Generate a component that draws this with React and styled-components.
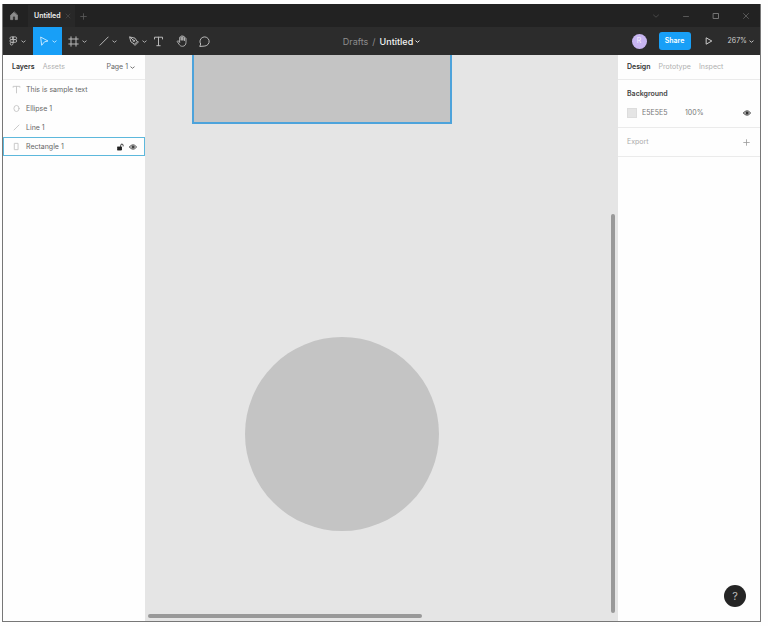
import React from 'react'
import styled, { createGlobalStyle } from 'styled-components'

const GlobalStyle = createGlobalStyle`
  * {
    box-sizing: border-box;
  }
  body {
    margin: 0;
    background: #fefefe;
    font-family: Inter, "Liberation Sans", sans-serif;
    font-size: 7px;
    line-height: 10px;
    color: #333;
  }
  button, input {
    font: inherit;
    color: inherit;
    margin: 0;
    padding: 0;
    border: 0;
    background: none;
  }
  svg {
    display: block;
    flex: none;
  }
`

const Page = styled.div`
  height: 100vh;
  padding: 4px 7px 4px 2px;
`

const Window = styled.div`
  height: 100%;
  display: flex;
  flex-direction: column;
  border: 1px solid #777;
  border-top: 0;
`

const TitleBar = styled.header`
  height: 23px;
  flex: none;
  display: flex;
  align-items: center;
  padding-top: 1px;
  background: #222;
  color: #777;
`

const HomeButton = styled.button`
  width: 25px;
  display: flex;
  padding-left: 6px;
  color: #8c8c8c;
`

const FileTab = styled.div`
  height: 100%;
  width: 47px;
  display: flex;
  align-items: center;
  justify-content: space-between;
  padding: 0 4px 0 6px;
  background: #282828;
  color: #f0f0f0;
  font-weight: 600;
`

const TabButton = styled.button`
  display: flex;
  color: #484848;
`

const NewTabButton = styled(TabButton)`
  margin-left: 5px;
  color: #5c5c5c;
`

const WindowButtons = styled.div`
  margin-left: auto;
  display: flex;
  padding-right: 10px;
  gap: 22px;
`

const Toolbar = styled.div`
  height: 28px;
  flex: none;
  display: grid;
  grid-template-columns: 1fr auto 1fr;
  background: #2c2c2c;
  color: #b8b8b8;
`

const Tools = styled.div`
  display: flex;
  gap: 1px;
`

const MenuTool = styled.button`
  width: 29px;
  display: flex;
  align-items: center;
  justify-content: center;
  gap: 3px;
  background: ${(p) => (p.$active ? '#189ff7' : 'none')};
  color: ${(p) => (p.$active ? '#c0e6ff' : '#b8b8b8')};
`

const PlainTools = styled.div`
  display: flex;
  gap: 12px;
`

const PlainTool = styled.button`
  width: 11px;
  display: flex;
  align-items: center;
  justify-content: center;
`

const FileTitle = styled.div`
  display: flex;
  align-items: center;
  gap: 4px;
  padding-top: 1px;
  font-size: 9px;
  color: #8c8c8c;
`

const FileName = styled.button`
  display: flex;
  align-items: center;
  gap: 2px;
  font-weight: 500;
  color: #f4f4f4;
`

const Actions = styled.div`
  display: flex;
  align-items: center;
  justify-content: flex-end;
  padding-right: 6px;
`

const Avatar = styled.span`
  width: 15px;
  height: 15px;
  border-radius: 50%;
  display: flex;
  align-items: center;
  justify-content: center;
  background: #c7b5f0;
  color: #f6f1ff;
`

const ShareButton = styled.button`
  width: 32px;
  height: 18px;
  margin: 0 14px 0 12px;
  border-radius: 3px;
  background: #189ff7;
  color: #fff;
  font-weight: 600;
`

const IconButton = styled.button`
  display: flex;
  color: ${(p) => p.$color || '#ccc'};
`

const ZoomButton = styled.button`
  display: flex;
  align-items: center;
  gap: 2px;
  margin-left: 15px;
  color: #ccc;
`

const Body = styled.div`
  flex: 1;
  min-height: 0;
  display: grid;
  grid-template-columns: 142px 1fr 142px;
`

const Panel = styled.aside`
  background: #fefefe;
  position: relative;
`

const Tabs = styled.div`
  height: 25px;
  display: flex;
  align-items: center;
  gap: 8px;
  padding: 0 10px 0 9px;
  border-bottom: 1px solid #ebebeb;
`

const Tab = styled.button`
  color: ${(p) => (p.$active ? '#333' : '#b0b0b0')};
  font-weight: ${(p) => (p.$active ? 600 : 400)};
`

const PageButton = styled.button`
  display: flex;
  align-items: center;
  gap: 2px;
  margin-left: auto;
  color: #666;
`

const Layers = styled.ul`
  list-style: none;
  margin: 0;
  padding: 0;
`

const Layer = styled.li`
  height: 19px;
  display: flex;
  align-items: center;
  gap: 5px;
  padding: 0 7px 0 8px;
  border: 1px solid ${(p) => (p.$selected ? '#5db8dc' : 'transparent')};
  color: #c4c4c4;
`

const LayerName = styled.button`
  flex: 1;
  text-align: left;
  color: #666;
`

const Canvas = styled.main`
  position: relative;
  overflow: hidden;
  background: #e5e5e5;
`

const RectangleShape = styled.div`
  position: absolute;
  left: 47px;
  top: -60px;
  width: 260px;
  height: 129px;
  background: #c4c4c4;
  border: 2px solid #4da3db;
`

const EllipseShape = styled.div`
  position: absolute;
  left: 100px;
  top: 282px;
  width: 194px;
  height: 194px;
  border-radius: 50%;
  background: #c4c4c4;
`

const ScrollThumb = styled.div`
  position: absolute;
  border-radius: 2px;
  background: #999;
`

const VerticalThumb = styled(ScrollThumb)`
  right: 3px;
  top: 159px;
  bottom: 8px;
  width: 4px;
`

const HorizontalThumb = styled(ScrollThumb)`
  left: 3px;
  bottom: 3px;
  width: 58%;
  height: 4px;
`

const Section = styled.section`
  padding: 9px;
  border-bottom: 1px solid #ebebeb;
`

const SectionTitle = styled.h2`
  margin: 0;
  font-size: 7px;
  font-weight: ${(p) => (p.$muted ? 400 : 600)};
  color: ${(p) => (p.$muted ? '#aaa' : '#444')};
`

const SectionHeader = styled.div`
  display: flex;
  align-items: center;
  justify-content: space-between;
  padding-right: 1px;
`

const FillRow = styled.div`
  display: flex;
  align-items: center;
  margin-top: 9px;
  color: #777;
`

const Swatch = styled.button`
  width: 10px;
  height: 10px;
  margin-right: 5px;
  background: #e5e5e5;
  border: 1px solid #ddd;
`

const Field = styled.input`
  width: ${(p) => (p.$wide ? '43px' : '24px')};
  height: 10px;
  outline: none;
`

const FillEye = styled(IconButton)`
  margin-left: auto;
`

const HelpButton = styled.button`
  position: absolute;
  right: 14px;
  bottom: 14px;
  width: 22px;
  height: 22px;
  border-radius: 50%;
  background: #252525;
  color: #bbb;
  font-size: 11px;
`

const Icon = ({ w = 10, h = w, sw = 1, box, children }) => (
  <svg width={w} height={h} viewBox={box || `0 0 ${w} ${h}`} fill="none" stroke="currentColor" strokeWidth={sw} strokeLinecap="round" strokeLinejoin="round" aria-hidden="true">
    {children}
  </svg>
)

const Chevron = () => (
  <Icon w={5} sw={0.9}><path d="M.8 1.9 2.5 3.3 4.2 1.9" /></Icon>
)

const Cross = () => (
  <Icon w={6} sw={0.8}><path d="M1 1l4 4M5 1 1 5" /></Icon>
)

const Plus = ({ size = 7 }) => (
  <Icon w={size} sw={0.8} box="0 0 7 7"><path d="M3.5.7v5.6M.7 3.5h5.6" /></Icon>
)

const Home = () => (
  <Icon w={10} sw={0.8}>
    <path d="M5 1.2 1.6 4.2v4.4h2.2V6.2a1.2 1.2 0 0 1 2.4 0v2.4h2.2V4.2z" fill="currentColor" />
  </Icon>
)

const FigmaMark = () => (
  <Icon w={9} h={10} sw={0.9}>
    <path d="M4 .9H2.3a1.3 1.3 0 0 0 0 2.7H4zM4 .9h2.3a1.3 1.3 0 0 1 0 2.7H4zM4 3.6H2.3a1.3 1.3 0 0 0 0 2.7H4zM4 6.3H2.3A1.4 1.4 0 1 0 4 7.8zM4 3.6h2.3a1.3 1.3 0 0 1 0 2.7H4" />
  </Icon>
)

const Pointer = () => (
  <Icon w={10}><path d="M2 1.2 9 5 5.5 5.8 2.9 9z" /></Icon>
)

const Frame = () => (
  <Icon w={11}><path d="M3 .8v9.4M8 .8v9.4M.8 3h9.4M.8 8h9.4" /></Icon>
)

const Line = () => (
  <Icon w={10}><path d="M1 9.2 9.2 1" /></Icon>
)

const Pen = () => (
  <Icon w={10}>
    <path d="M1 1l5 1.2 2.2 3.3-2.7 2.7L2.2 6zM8.6 5.2 9.4 6 6 9.4l-.8-.8M1 1l3.2 3.2" />
    <circle cx="4.8" cy="4.8" r=".8" />
  </Icon>
)

const TextTool = () => (
  <Icon w={11}><path d="M1.5 3V1.2h8V3M5.5 1.2v8.4M3.8 9.7h3.4" /></Icon>
)

const Hand = () => (
  <Icon w={12} sw={0.9}>
    <path d="M3.6 7V2.6a.8.8 0 0 1 1.6 0V5M5.2 5V1.5a.8.8 0 0 1 1.6 0V5M6.8 5V2.1a.8.8 0 0 1 1.6 0v3.3M8.4 5.4V3.6a.8.8 0 0 1 1.6 0v3.9c0 2.2-1.4 3.8-3.5 3.8-1.7 0-2.6-.7-3.4-2L1.3 6.7c-.3-.9.8-1.3 1.3-.7L3.6 7.3" />
  </Icon>
)

const Comment = () => (
  <Icon w={11}><path d="M.9 10.1 1.7 8A4.6 4.6 0 1 1 5.5 10.1z" /></Icon>
)

const Play = () => (
  <Icon w={8} h={8}><path d="M1.5 1 6.8 4 1.5 7z" /></Icon>
)

const Eye = () => (
  <Icon w={8} sw={0.9}>
    <path d="M.5 4C2.2 1.1 5.8 1.1 7.5 4 5.8 6.9 2.2 6.9.5 4z" />
    <circle cx="4" cy="4" r="1.2" fill="currentColor" />
  </Icon>
)

const Unlock = () => (
  <Icon w={7} h={8} sw={0.9}>
    <path d="M3.7 4V2.3a1.2 1.2 0 0 1 2.4 0V3" />
    <rect x="0.7" y="4" width="3.8" height="3" fill="currentColor" />
  </Icon>
)

const layers = [
  { name: 'This is sample text', icon: <path d="M1 2V1.2h6V2M4 1.2V7" /> },
  { name: 'Ellipse 1', icon: <ellipse cx="4" cy="4" rx="2.3" ry="2.7" /> },
  { name: 'Line 1', icon: <path d="M1.8 6.2 6.2 1.8" /> },
  { name: 'Rectangle 1', icon: <rect x="2.4" y="1.2" width="3" height="5.6" />, selected: true },
]

const menuTools = [
  { label: 'Main menu', icon: <FigmaMark /> },
  { label: 'Move', icon: <Pointer />, active: true },
  { label: 'Frame', icon: <Frame /> },
  { label: 'Line', icon: <Line /> },
  { label: 'Pen', icon: <Pen /> },
]

const App = () => {
  return (
    <Page>
      <GlobalStyle />
      <Window>
        <TitleBar>
          <HomeButton aria-label="Home"><Home /></HomeButton>
          <FileTab>
            Untitled
            <TabButton aria-label="Close tab"><Cross /></TabButton>
          </FileTab>
          <NewTabButton aria-label="New tab"><Plus /></NewTabButton>
          <WindowButtons>
            <IconButton $color="#505050" aria-label="More"><Icon w={8} sw={0.8}><path d="M1.5 3 4 5.2 6.5 3" /></Icon></IconButton>
            <IconButton $color="#666" aria-label="Minimize"><Icon w={8} sw={0.8}><path d="M1.5 4.5h5" /></Icon></IconButton>
            <IconButton $color="#888" aria-label="Maximize"><Icon w={8} sw={0.8}><rect x="1.5" y="1.5" width="5" height="5" /></Icon></IconButton>
            <IconButton $color="#666" aria-label="Close"><Icon w={8} sw={0.8}><path d="M1.5 1.5l5 5M6.5 1.5l-5 5" /></Icon></IconButton>
          </WindowButtons>
        </TitleBar>

        <Toolbar>
          <Tools>
            {menuTools.map((tool) => (
              <MenuTool key={tool.label} $active={tool.active} aria-label={tool.label}>
                {tool.icon}
                <Chevron />
              </MenuTool>
            ))}
            <PlainTools>
              <PlainTool aria-label="Text"><TextTool /></PlainTool>
              <PlainTool aria-label="Hand"><Hand /></PlainTool>
              <PlainTool aria-label="Comment"><Comment /></PlainTool>
            </PlainTools>
          </Tools>
          <FileTitle>
            <span>Drafts</span>
            <span>/</span>
            <FileName>Untitled <Chevron /></FileName>
          </FileTitle>
          <Actions>
            <Avatar>R</Avatar>
            <ShareButton>Share</ShareButton>
            <IconButton aria-label="Present"><Play /></IconButton>
            <ZoomButton>267% <Chevron /></ZoomButton>
          </Actions>
        </Toolbar>

        <Body>
          <Panel>
            <Tabs>
              <Tab $active>Layers</Tab>
              <Tab>Assets</Tab>
              <PageButton>Page 1 <Chevron /></PageButton>
            </Tabs>
            <Layers>
              {layers.map((layer) => (
                <Layer key={layer.name} $selected={layer.selected}>
                  <Icon w={9} sw={0.8} box="0 0 8 8">{layer.icon}</Icon>
                  <LayerName>{layer.name}</LayerName>
                  {layer.selected && (
                    <>
                      <IconButton $color="#222" aria-label="Lock"><Unlock /></IconButton>
                      <IconButton $color="#444" aria-label="Hide"><Eye /></IconButton>
                    </>
                  )}
                </Layer>
              ))}
            </Layers>
          </Panel>

          <Canvas>
            <RectangleShape />
            <EllipseShape />
            <VerticalThumb />
            <HorizontalThumb />
          </Canvas>

          <Panel>
            <Tabs>
              <Tab $active>Design</Tab>
              <Tab>Prototype</Tab>
              <Tab>Inspect</Tab>
            </Tabs>
            <Section>
              <SectionTitle>Background</SectionTitle>
              <FillRow>
                <Swatch aria-label="Background colour" />
                <Field $wide aria-label="Hex" defaultValue="E5E5E5" />
                <Field aria-label="Opacity" defaultValue="100%" />
                <FillEye $color="#333" aria-label="Toggle background"><Eye /></FillEye>
              </FillRow>
            </Section>
            <Section>
              <SectionHeader>
                <SectionTitle $muted>Export</SectionTitle>
                <IconButton $color="#999" aria-label="Add export"><Plus /></IconButton>
              </SectionHeader>
            </Section>
            <HelpButton aria-label="Help">?</HelpButton>
          </Panel>
        </Body>
      </Window>
    </Page>
  )
}

export default App
